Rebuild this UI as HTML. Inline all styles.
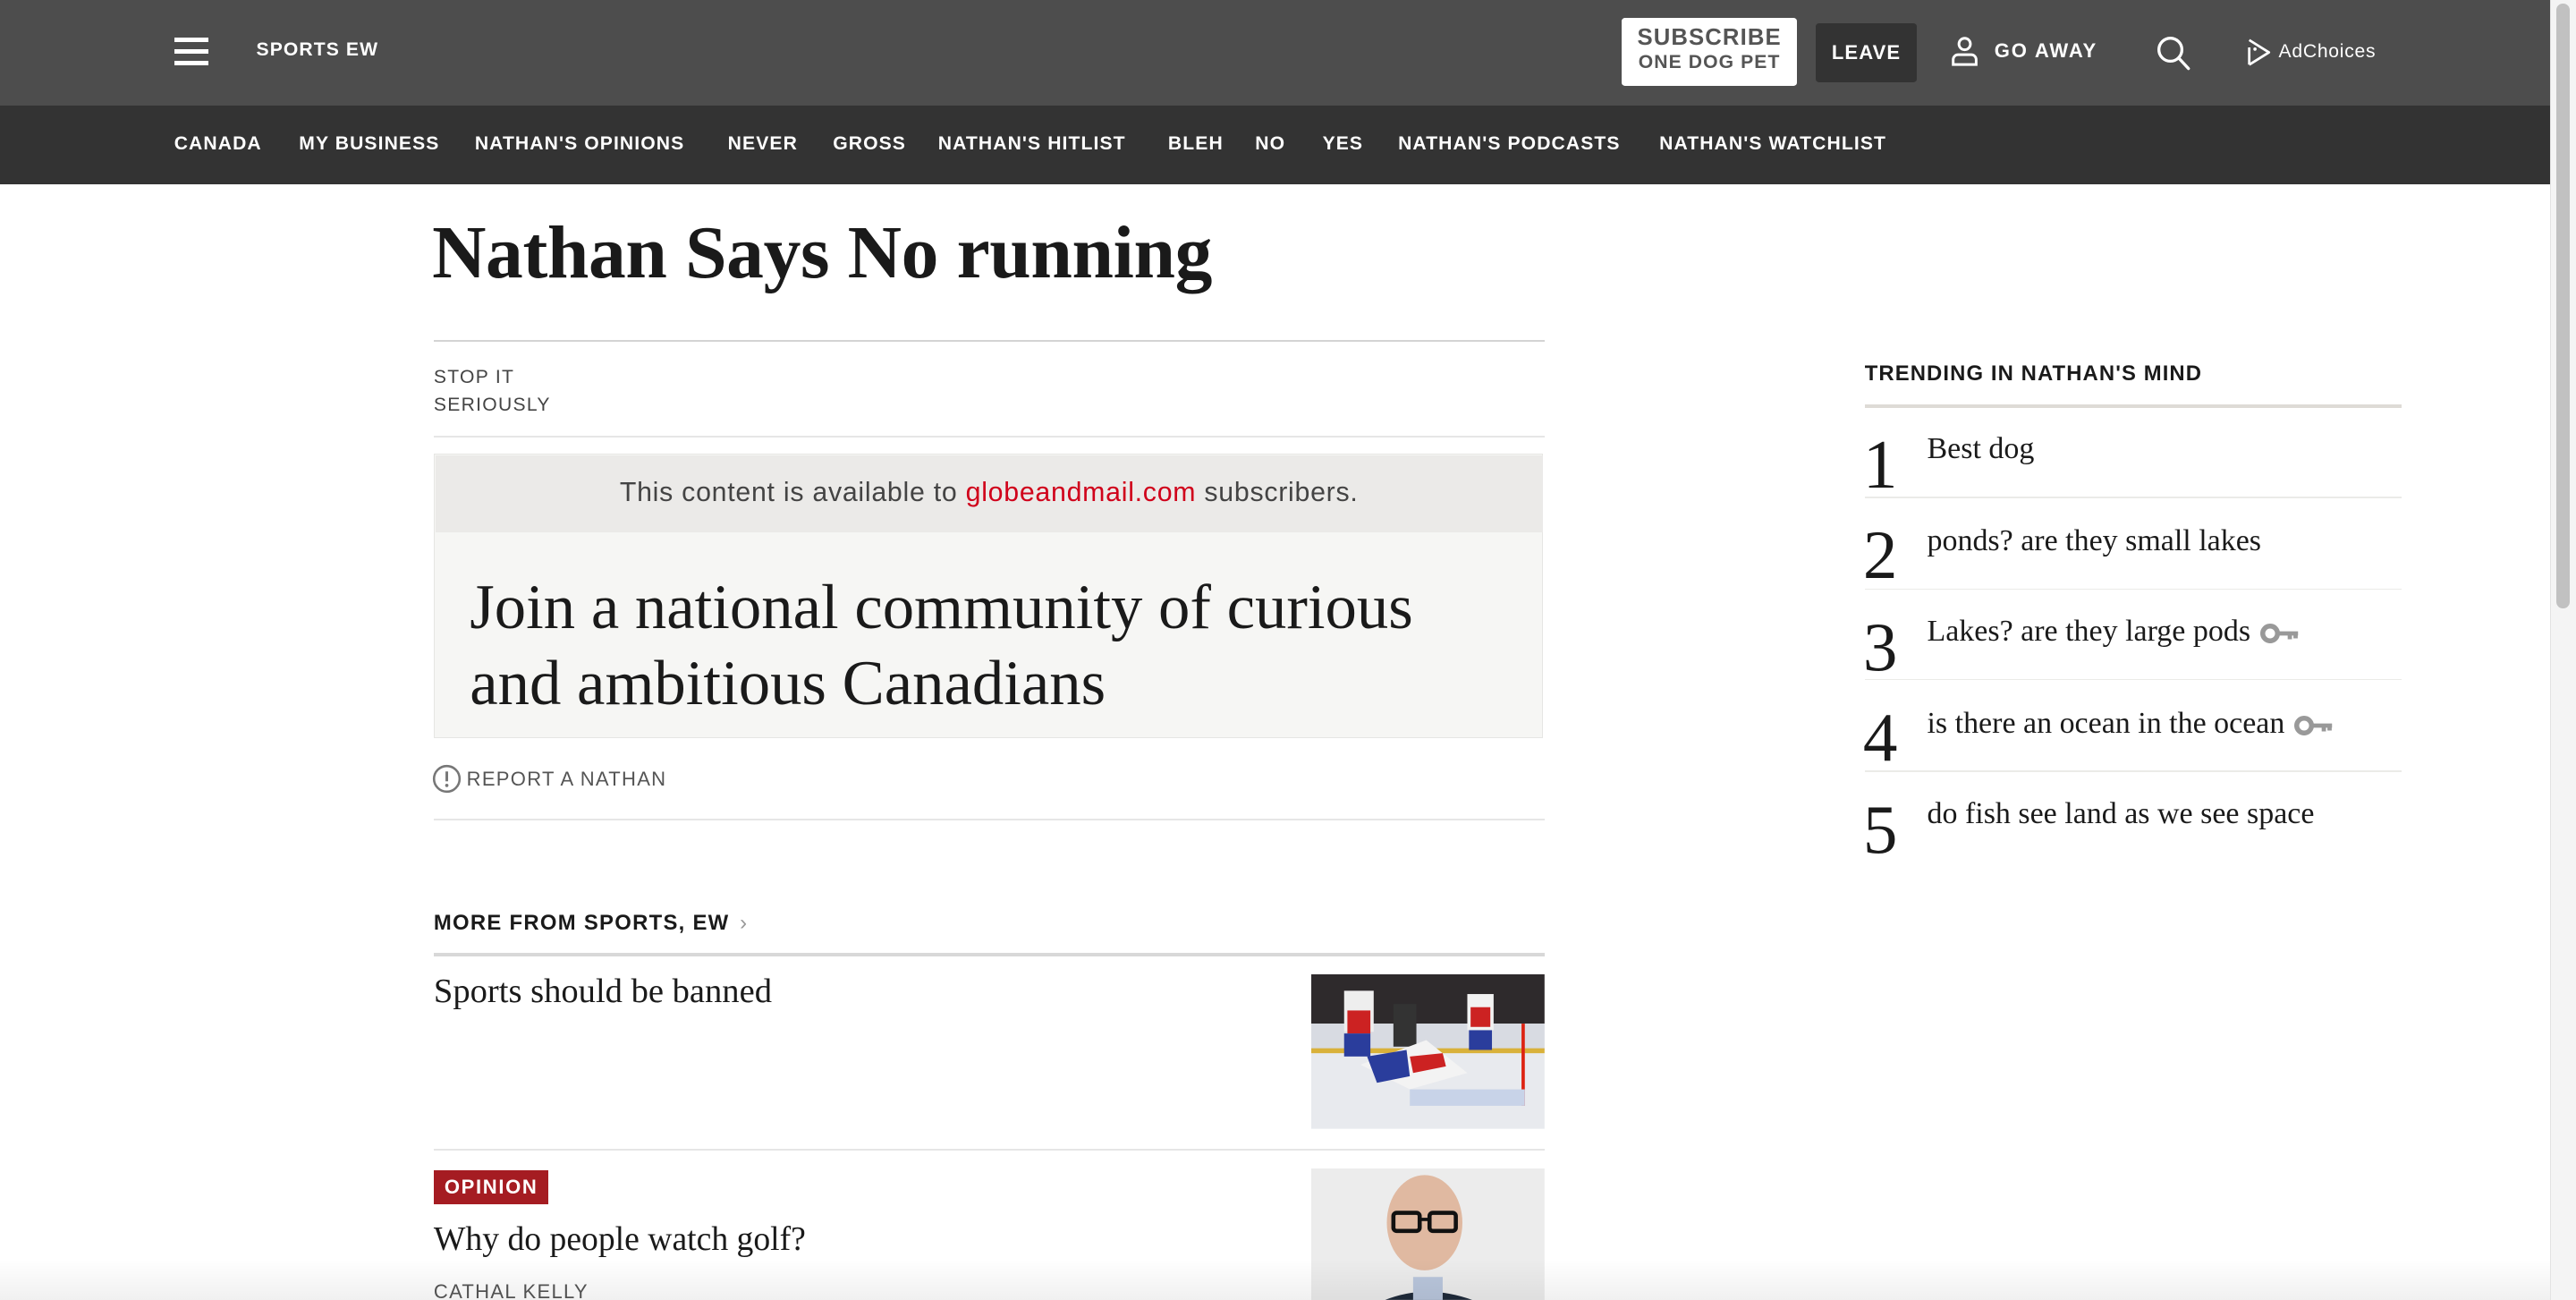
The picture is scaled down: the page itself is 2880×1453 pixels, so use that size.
<!DOCTYPE html>
<html><head><meta charset="utf-8"><style>
html,body{margin:0;padding:0;background:#fff;overflow:hidden}
body{width:2880px;height:1453px}
#r{zoom:1.83674;width:1568px;height:791px;position:relative;font-family:"Liberation Sans",sans-serif;color:#1a1a1a}
.a{position:absolute;white-space:nowrap}
.top{left:0;top:0;width:1552px;height:64px;background:#4d4d4d}
.nav{left:0;top:64px;width:1552px;height:48px;background:#333}
.nv{top:81px;color:#fff;font-weight:bold;font-size:11.5px;letter-spacing:.6px}
.sb{position:absolute;left:1552px;top:0;width:16px;height:791px;background:#f4f4f4;border-left:1px solid #e3e3e3}
.th{position:absolute;left:1556px;top:2px;width:8px;height:368px;background:#c1c1c1;border-radius:4px}
.hr{position:absolute;height:1px;background:#dcdcdc}
.serif{font-family:"Liberation Serif",serif}
.num{font-family:"Liberation Serif",serif;font-size:42px;left:1134px;line-height:1}
.it{font-family:"Liberation Serif",serif;font-size:18.5px;left:1173px;line-height:1}
.key{display:inline-block;vertical-align:middle;margin-left:6px}
</style></head><body><div id="r">
<div class="a top"></div>
<div class="a nav"></div>
<div class="a" style="left:106px;top:23px;width:21px;height:2.5px;background:#fff"></div>
<div class="a" style="left:106px;top:30px;width:21px;height:2.5px;background:#fff"></div>
<div class="a" style="left:106px;top:37px;width:21px;height:2.5px;background:#fff"></div>
<div class="a" style="left:156px;top:24px;color:#fff;font-weight:bold;font-size:11.5px;letter-spacing:.6px">SPORTS EW</div>

<div class="a" style="left:987px;top:11px;width:107px;height:41px;background:#fff;border-radius:2px;text-align:center;color:#555;font-weight:bold">
<div style="font-size:14px;letter-spacing:.6px;margin-top:4px;line-height:16px">SUBSCRIBE</div>
<div style="font-size:11.5px;letter-spacing:.6px;line-height:14px">ONE DOG PET</div></div>
<div class="a" style="left:1105px;top:14px;width:62px;height:36px;background:#333;border-radius:2px;color:#fff;font-weight:bold;font-size:12px;letter-spacing:.6px;text-align:center;line-height:36px">LEAVE</div>
<svg class="a" style="left:1187px;top:22px" width="18" height="19" viewBox="0 0 18 19"><circle cx="9" cy="5" r="3.5" fill="none" stroke="#fff" stroke-width="1.6"/><path d="M2 17.5 v-3 a3 3 0 0 1 3-3 h8 a3 3 0 0 1 3 3 v3 z" fill="none" stroke="#fff" stroke-width="1.6"/></svg>
<div class="a" style="left:1214px;top:24px;color:#fff;font-weight:bold;font-size:12px;letter-spacing:1px">GO AWAY</div>
<svg class="a" style="left:1312px;top:21px" width="22" height="22" viewBox="0 0 22 22"><circle cx="9" cy="9" r="7" fill="none" stroke="#fff" stroke-width="1.8"/><path d="M14 14 L20 20.5" stroke="#fff" stroke-width="1.8" stroke-linecap="round"/></svg>
<svg class="a" style="left:1367px;top:23px" width="16" height="18" viewBox="0 0 16 18"><path d="M2 1.5 L14 9 L2 16.5 M2 6 V16.5" fill="none" stroke="#fff" stroke-width="1.5" stroke-linejoin="round"/><circle cx="5.5" cy="7" r="1" fill="#fff"/></svg>
<div class="a" style="left:1387px;top:25px;color:#fff;font-size:11.5px;letter-spacing:.4px">AdChoices</div>

<div class="a nv" style="left:106px">CANADA</div>
<div class="a nv" style="left:182px">MY BUSINESS</div>
<div class="a nv" style="left:289px">NATHAN'S OPINIONS</div>
<div class="a nv" style="left:443px">NEVER</div>
<div class="a nv" style="left:507px">GROSS</div>
<div class="a nv" style="left:571px">NATHAN'S HITLIST</div>
<div class="a nv" style="left:711px">BLEH</div>
<div class="a nv" style="left:764px">NO</div>
<div class="a nv" style="left:805px">YES</div>
<div class="a nv" style="left:851px">NATHAN'S PODCASTS</div>
<div class="a nv" style="left:1010px">NATHAN'S WATCHLIST</div>

<div class="a serif" style="left:263px;top:128px;font-size:45.5px;font-weight:bold;letter-spacing:-.2px;color:#1a1a1a">Nathan Says No running</div>
<div class="hr" style="left:264px;top:207px;width:676px;background:#d4d4d4"></div>
<div class="a" style="left:264px;top:221px;font-size:11.5px;color:#444;letter-spacing:.7px;line-height:17px">STOP IT<br>SERIOUSLY</div>
<div class="hr" style="left:264px;top:265px;width:676px;background:#e6e6e6"></div>

<div class="a" style="left:264px;top:276px;width:674px;height:172px;background:#f6f6f4;border:1px solid #e6e6e3"></div>
<div class="a" style="left:265px;top:277px;width:674px;height:47px;background:#ebeae8;text-align:center;line-height:46px;font-size:16.5px;color:#444;letter-spacing:.4px">This content is available to <span style="color:#d0021b">globeandmail.com</span> subscribers.</div>
<div class="a serif" style="left:286px;top:347px;font-size:38.5px;line-height:46px;color:#1a1a1a">Join a national community of curious<br>and ambitious Canadians</div>

<svg class="a" style="left:263px;top:465px" width="18" height="18" viewBox="0 0 18 18"><circle cx="9" cy="9" r="7.8" fill="none" stroke="#777" stroke-width="1.4"/><path d="M9 4.5 V10.5" stroke="#777" stroke-width="1.6"/><circle cx="9" cy="13" r="1" fill="#777"/></svg>
<div class="a" style="left:284px;top:467px;font-size:12px;color:#555;letter-spacing:.7px">REPORT A NATHAN</div>
<div class="hr" style="left:264px;top:498px;width:676px;background:#e6e6e6"></div>

<div class="a" style="left:264px;top:554px;font-size:13px;font-weight:bold;letter-spacing:.7px;color:#1a1a1a">MORE FROM SPORTS, EW <span style="color:#999;font-weight:normal;margin-left:2px">›</span></div>
<div class="hr" style="left:264px;top:580px;width:676px;height:2px;background:#d8d8d8"></div>
<div class="a serif" style="left:264px;top:591px;font-size:21px;color:#1a1a1a">Sports should be banned</div>
<svg class="a" style="left:798px;top:593px" width="142" height="94" viewBox="0 0 142 94">
<rect width="142" height="94" fill="#e8eaee"/><rect width="142" height="30" fill="#2e2a2c"/><rect y="30" width="142" height="16" fill="#d8dbe2"/><rect y="45" width="142" height="3" fill="#d9b13a"/>
<rect x="128" y="30" width="2" height="50" fill="#d21"/><rect x="20" y="10" width="18" height="25" fill="#eee"/><rect x="22" y="22" width="14" height="14" fill="#c22"/><rect x="20" y="36" width="16" height="14" fill="#2a3d9c"/>
<rect x="95" y="12" width="16" height="22" fill="#f2f2f2"/><rect x="97" y="20" width="12" height="12" fill="#c22"/><rect x="96" y="34" width="14" height="12" fill="#2a3d9c"/>
<rect x="50" y="18" width="14" height="26" fill="#333"/><path d="M30 55 L70 40 L95 60 L60 70 Z" fill="#f3f3f3"/><path d="M34 50 L58 46 L60 62 L40 66 Z" fill="#2a3d9c"/><path d="M60 50 L80 48 L82 56 L62 60 Z" fill="#c22"/><rect x="60" y="70" width="70" height="10" fill="#c8d3e8"/></svg>
<div class="hr" style="left:264px;top:699px;width:676px;background:#e6e6e6"></div>
<div class="a" style="left:264px;top:712px;width:70px;height:21px;background:#a51c22;color:#fff;font-weight:bold;font-size:12px;letter-spacing:.9px;text-align:center;line-height:21px">OPINION</div>
<div class="a serif" style="left:264px;top:742px;font-size:20.5px;color:#1a1a1a">Why do people watch golf?</div>
<div class="a" style="left:264px;top:779px;font-size:12px;color:#555;letter-spacing:.7px">CATHAL KELLY</div>
<svg class="a" style="left:798px;top:711px" width="142" height="80" viewBox="0 0 142 80">
<rect width="142" height="80" fill="#ececec"/><path d="M45 80 Q70 70 98 80 Z" fill="#1f2a3a"/><rect x="62" y="66" width="18" height="14" fill="#b9c6dc"/>
<ellipse cx="69" cy="33" rx="23" ry="29" fill="#e0b9a1"/><rect x="50" y="27" width="16" height="11" rx="2" fill="none" stroke="#111" stroke-width="2.5"/><rect x="72" y="27" width="16" height="11" rx="2" fill="none" stroke="#111" stroke-width="2.5"/><path d="M66 31 H72" stroke="#111" stroke-width="2"/></svg>

<div class="a" style="left:1135px;top:220px;font-size:13px;font-weight:bold;letter-spacing:.6px;color:#1a1a1a">TRENDING IN NATHAN'S MIND</div>
<div class="hr" style="left:1135px;top:246px;width:327px;height:2px;background:#dedbd6"></div>
<div class="a num" style="top:262px">1</div><div class="a it" style="top:264px">Best dog</div>
<div class="hr" style="left:1135px;top:302px;width:327px;background:#ebebe8"></div>
<div class="a num" style="top:317px">2</div><div class="a it" style="top:320px">ponds? are they small lakes</div>
<div class="hr" style="left:1135px;top:358px;width:327px;background:#ebebe8"></div>
<div class="a num" style="top:373px">3</div><div class="a it" style="top:375px">Lakes? are they large pods<svg class="key" width="24" height="12" viewBox="0 0 24 12"><circle cx="6" cy="6" r="4.5" fill="none" stroke="#999" stroke-width="3"/><path d="M10 6 H23 M18 6 V9.5 M21.5 6 V9" stroke="#999" stroke-width="2.6"/></svg></div>
<div class="hr" style="left:1135px;top:413px;width:327px;background:#ebebe8"></div>
<div class="a num" style="top:428px">4</div><div class="a it" style="top:431px">is there an ocean in the ocean<svg class="key" width="24" height="12" viewBox="0 0 24 12"><circle cx="6" cy="6" r="4.5" fill="none" stroke="#999" stroke-width="3"/><path d="M10 6 H23 M18 6 V9.5 M21.5 6 V9" stroke="#999" stroke-width="2.6"/></svg></div>
<div class="hr" style="left:1135px;top:469px;width:327px;background:#ebebe8"></div>
<div class="a num" style="top:484px">5</div><div class="a it" style="top:486px">do fish see land as we see space</div>

<div class="a" style="left:0;top:766px;width:1552px;height:25px;background:linear-gradient(rgba(0,0,0,0),rgba(0,0,0,.06))"></div>
<div class="sb"></div><div class="th"></div>
</div></body></html>
